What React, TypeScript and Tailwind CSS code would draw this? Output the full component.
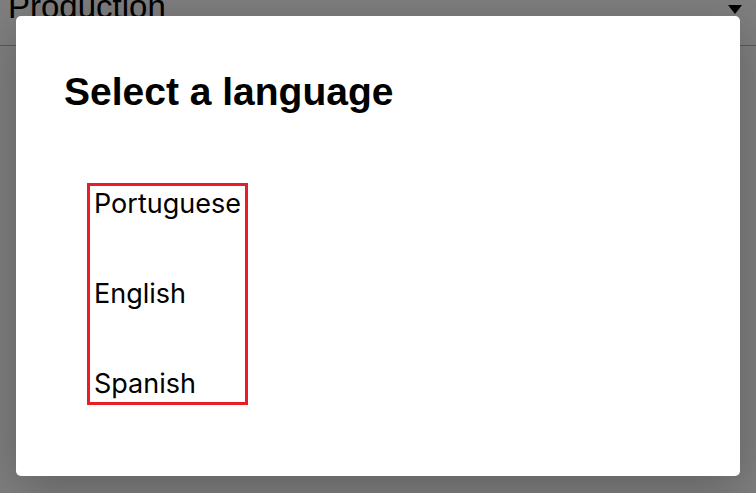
import React, { useState } from 'react';

const LANGUAGES = ['Portuguese', 'English', 'Spanish'];

export default function App() {
  const [selected, setSelected] = useState<string | null>(null);

  return (
    <div className="relative h-[493px] w-[756px] overflow-hidden bg-white" style={{ fontFamily: '"Liberation Sans", Arial, sans-serif' }}>
      {/* Page header behind the modal */}
      <div className="flex h-[46px] items-start justify-between border-b border-[#b5b5b5] pl-2 pr-[14px]">
        <span className="-mt-[10px] text-[33px] leading-[34px] text-black">Production</span>
        <svg width="14" height="9" viewBox="0 0 14 9" className="mt-[5px]">
          <path d="M0 0 H14 L7 9 Z" fill="#000" />
        </svg>
      </div>

      {/* Backdrop */}
      <div className="absolute inset-0 bg-black/50" />

      {/* Dialog */}
      <div className="absolute left-4 top-4 h-[460px] w-[724px] rounded-[5px] bg-white shadow-[0_12px_50px_rgba(0,0,0,0.25)]">
        <div className="px-12 pt-[53px]">
          <h2 className="text-[39px] font-bold leading-[46px] text-black">Select a language</h2>
          <div className="ml-[23px] mt-[68px] w-fit border-[3px] border-[#ec1c24] px-[4px] pb-[2px] pt-[2px]">
            <ul className="flex flex-col gap-[58px]" style={{ fontFamily: 'Inter, "Noto Sans", sans-serif' }}>
              {LANGUAGES.map((lang) => (
                <li key={lang}>
                  <button
                    onClick={() => setSelected(lang)}
                    className={`text-[27px] leading-[32px] ${selected === lang ? 'text-blue-600' : 'text-black'}`}
                  >
                    {lang}
                  </button>
                </li>
              ))}
            </ul>
          </div>
        </div>
      </div>
    </div>
  );
}
